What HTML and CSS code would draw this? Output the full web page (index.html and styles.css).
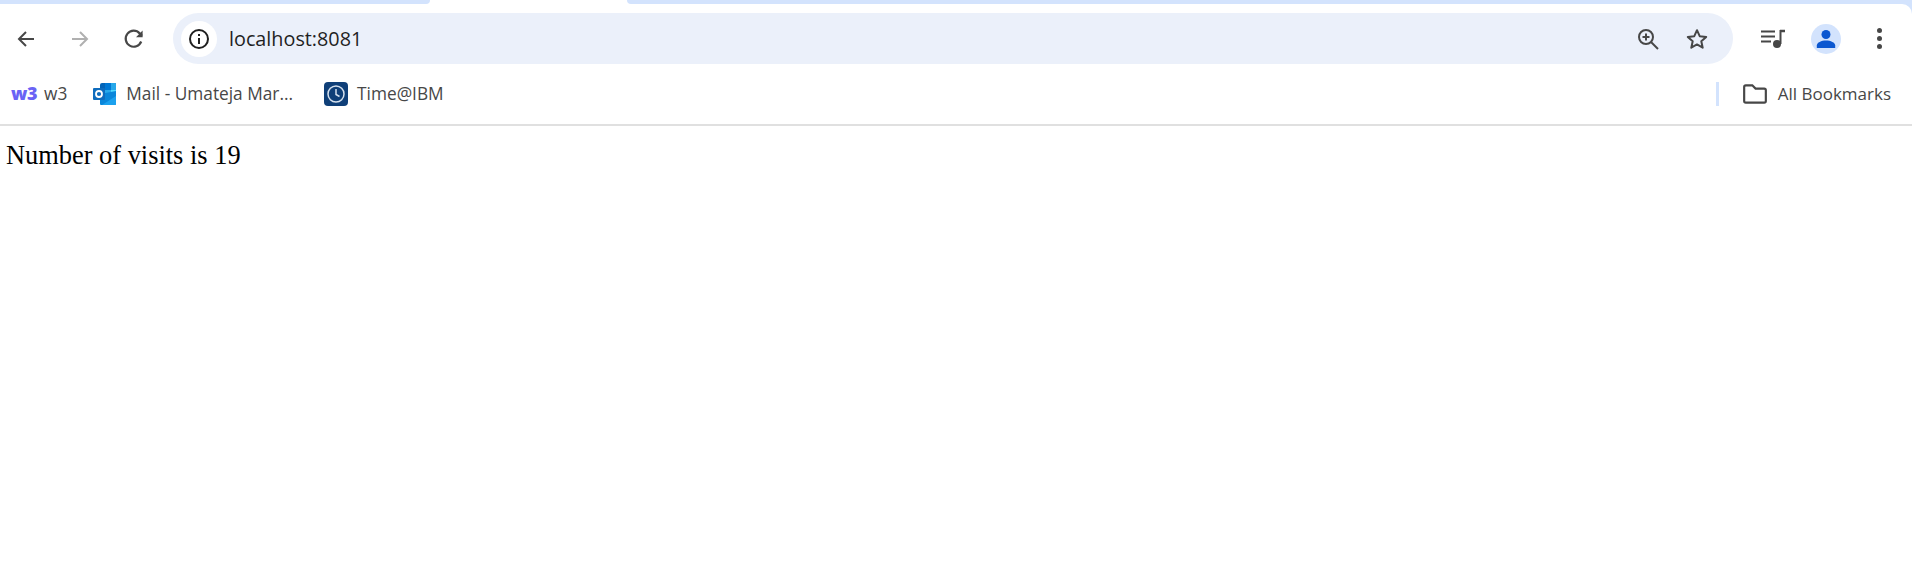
FILE: index.html
```html
<!DOCTYPE html>
<html>
  <head>
    <title>localhost:8081</title>
    <link rel="stylesheet" href="styles.css">
  </head>
  <body>
    <header class="browser">
      <div class="tabstrip">
        <div class="strip-left"></div>
        <div class="strip-tab"></div>
        <div class="strip-right"></div>
      </div>
      <div class="toolbar">
        <div class="nav-buttons">
          <svg class="icon" viewBox="0 0 24 24"><path d="M20 12H5M12 5l-7 7 7 7" fill="none" stroke="#474747" stroke-width="2"/></svg>
          <svg class="icon" viewBox="0 0 24 24"><path d="M4 12h15M12 5l7 7-7 7" fill="none" stroke="#b0b0b0" stroke-width="2"/></svg>
          <svg class="icon" viewBox="0 0 24 24"><path d="M19.2 14.5A8 8 0 1 1 17.7 6.4L20 8.7" fill="none" stroke="#474747" stroke-width="2.200"/><path d="M20.6 3.6v6.6H14z" fill="#474747"/></svg>
        </div>
        <div class="omnibox">
          <div class="site-chip">
            <svg class="chip-icon" viewBox="0 0 22 22"><circle cx="11" cy="11" r="9" fill="none" stroke="#1f1f1f" stroke-width="2"/><path d="M11 10v6M11 6v2" stroke="#1f1f1f" stroke-width="2"/></svg>
          </div>
          <span class="url">localhost:8081</span>
          <div class="omni-actions">
            <svg class="icon" viewBox="0 0 24 24"><circle cx="10" cy="10" r="7" fill="none" stroke="#474747" stroke-width="2"/><path d="M15 15l7 7" stroke="#474747" stroke-width="2"/><path d="M10 6.500v7M6.500 10h7" stroke="#474747" stroke-width="2"/></svg>
            <svg class="icon" viewBox="0 0 24 24"><path d="M12 3.200l2.700 6 6.500.7-4.900 4.400 1.400 6.400-5.700-3.300-5.700 3.300 1.400-6.400-4.900-4.400 6.500-.7z" fill="none" stroke="#474747" stroke-width="2" stroke-linejoin="round"/></svg>
          </div>
        </div>
        <div class="tool-buttons">
          <svg class="icon" viewBox="0 0 24 24"><path d="M0 4.500h14M0 9.500h14M0 14.500h10" stroke="#474747" stroke-width="2"/><path d="M19 4h5" stroke="#474747" stroke-width="2.500"/><path d="M19.500 3v14" stroke="#474747" stroke-width="2"/><circle cx="16" cy="17" r="4" fill="#474747"/></svg>
          <div class="avatar">
            <svg class="avatar-icon" viewBox="0 0 20 20"><circle cx="10" cy="5.500" r="4.500" fill="#0b57d0"/><path d="M0.800 19v-2.500c0-3 4.600-5 9.200-5s9.200 2 9.200 5V19z" fill="#0b57d0"/></svg>
          </div>
          <div class="menu-dots"><i></i><i></i><i></i></div>
        </div>
      </div>
      <div class="bookmarks">
        <a class="bookmark first">
          <span class="w3-logo">w3</span>
          <span class="label">w3</span>
        </a>
        <a class="bookmark mail">
          <svg class="bm-icon" viewBox="0 0 24 24">
            <path d="M7 3a2 2 0 0 1 2-2h13a1 1 0 0 1 1 1v7H7z" fill="#0364b8"/>
            <path d="M12 1h6v7h-6z" fill="#0078d4"/>
            <path d="M18 1h4a1 1 0 0 1 1 1v6h-5z" fill="#28a8ea"/>
            <path d="M12 8h6v6h-6z" fill="#28a8ea"/>
            <path d="M18 8h5v6h-5z" fill="#50d9ff"/>
            <path d="M7 12l16-3v13a1 1 0 0 1-1 1H8a1 1 0 0 1-1-1z" fill="#0a86da"/>
            <path d="M9 23l14-9v8a1 1 0 0 1-1 1z" fill="#1ba1ee"/>
            <rect x="0" y="6" width="12" height="12" rx="1" fill="#0f6cbd"/>
            <circle cx="6" cy="12" r="3" fill="none" stroke="#fff" stroke-width="1.800"/>
          </svg>
          <span class="label">Mail - Umateja Mar...</span>
        </a>
        <a class="bookmark">
          <svg class="bm-icon" viewBox="0 0 24 24">
            <rect width="24" height="24" rx="4" fill="#0f3f78"/>
            <circle cx="12" cy="12" r="8" fill="none" stroke="#d5e1ee" stroke-width="1.500"/>
            <path d="M12 7v5.500l3.500 2" fill="none" stroke="#d5e1ee" stroke-width="1.500"/>
          </svg>
          <span class="label">Time@IBM</span>
        </a>
        <div class="all-bookmarks">
          <div class="separator"></div>
          <svg class="folder" viewBox="0 0 24 20"><path d="M2 5V3.500A1.500 1.500 0 0 1 3.500 2h6l3 3h8A1.500 1.500 0 0 1 22 6.500v10a1.500 1.500 0 0 1-1.500 1.500h-17A1.500 1.500 0 0 1 2 16.500z" fill="none" stroke="#474747" stroke-width="2"/></svg>
          <span class="label">All Bookmarks</span>
        </div>
      </div>
    </header>
    <main class="page">Number of visits is 19</main>
  </body>
</html>
```

FILE: styles.css
```css
html, body {
  margin: 0;
  padding: 0;
  background: #ffffff;
}

.browser {
  font-family: "Open Sans", sans-serif;
  color: #474747;
  background: #d3e3fd;
  border-bottom: 2px solid #e0e0e0;
}

.tabstrip {
  display: flex;
  height: 4px;
  background: #ffffff;
}

.strip-left {
  width: 430px;
  background: #d3e3fd;
  border-bottom-right-radius: 5px;
}

.strip-tab {
  width: 197px;
}

.strip-right {
  flex: 1;
  background: #d3e3fd;
  border-bottom-left-radius: 5px;
}

.toolbar {
  display: flex;
  align-items: center;
  height: 51px;
  padding-top: 9px;
  background: #ffffff;
  border-top-right-radius: 10px;
}

.icon {
  display: block;
  width: 24px;
  height: 24px;
}

.nav-buttons {
  display: flex;
  gap: 30px;
  padding-left: 14px;
  width: 173px;
  box-sizing: border-box;
}

.omnibox {
  display: flex;
  align-items: center;
  width: 1560px;
  height: 51px;
  border-radius: 26px;
  background: #ebf0fa;
  box-sizing: border-box;
  padding: 0 24px 0 8px;
}

.site-chip {
  display: flex;
  align-items: center;
  justify-content: center;
  width: 36px;
  height: 36px;
  border-radius: 50%;
  background: #ffffff;
}

.chip-icon {
  width: 22px;
  height: 22px;
}

.url {
  margin-left: 12px;
  font-size: 19.8px;
  color: #1f1f1f;
}

.omni-actions {
  display: flex;
  gap: 25px;
  margin-left: auto;
}

.tool-buttons {
  display: flex;
  align-items: center;
  flex: 1;
  padding-left: 28px;
}

.avatar {
  display: flex;
  align-items: flex-end;
  justify-content: center;
  width: 30px;
  height: 30px;
  margin-left: 26px;
  border-radius: 50%;
  background: #d3e3fd;
}

.avatar-icon {
  width: 20px;
  height: 20px;
  margin-bottom: 5px;
}

.menu-dots {
  display: flex;
  flex-direction: column;
  gap: 3px;
  margin-left: 36px;
}

.menu-dots i {
  display: block;
  width: 5px;
  height: 5px;
  border-radius: 50%;
  background: #474747;
}

.bookmarks {
  display: flex;
  align-items: center;
  height: 60px;
  font-size: 17px;
  background: #ffffff;
}

.label {
  padding-bottom: 2px;
}

.bookmark {
  display: flex;
  align-items: center;
  gap: 9px;
  margin-left: 26px;
  font-size: 17.3px;
}

.bookmark.first {
  margin-left: 11px;
}

.bookmark.mail {
  margin-right: 5px;
}

.w3-logo {
  width: 24px;
  font-size: 18px;
  font-weight: 800;
  letter-spacing: -0.5px;
  color: #6a63f5;
  padding-bottom: 2px;
}

.bm-icon {
  width: 24px;
  height: 24px;
}

.all-bookmarks {
  display: flex;
  align-items: center;
  margin-left: auto;
  padding-right: 21px;
}

.separator {
  width: 3px;
  height: 24px;
  background: #d3e3fd;
  margin-right: 23px;
}

.folder {
  width: 26px;
  height: 22px;
  margin-right: 10px;
}

.page {
  padding: 14px 6px;
  font-family: "Liberation Serif", serif;
  font-size: 26.4px;
  color: #000000;
}
```
